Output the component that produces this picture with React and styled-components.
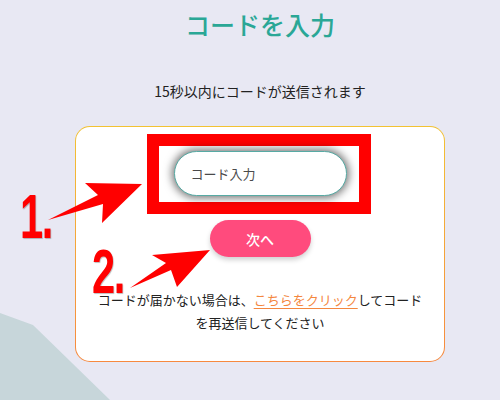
import React from "react";
import styled, { createGlobalStyle } from "styled-components";

const GlobalStyle = createGlobalStyle`
  html, body {
    margin: 0;
    padding: 0;
    background: #e8e8f3;
  }
  body {
    font-family: "Noto Sans CJK JP", "Noto Sans", sans-serif;
    color: #222;
  }
`;

const Page = styled.div`
  position: relative;
  width: 500px;
  height: 400px;
  overflow: hidden;
  box-sizing: border-box;
  padding: 9px 0 0 20px;
  display: flex;
  flex-direction: column;
  align-items: center;
`;

const Hill = styled.svg`
  position: absolute;
  left: 0;
  bottom: 0;
  z-index: 0;
`;

const Title = styled.h1`
  position: relative;
  margin: 0;
  font-size: 25px;
  line-height: 30px;
  font-weight: 500;
  color: #2aa796;
`;

const Lead = styled.p`
  position: relative;
  margin: 42px 0 0;
  font-size: 14px;
  line-height: 20px;
  color: #222;
`;

const Card = styled.div`
  position: relative;
  z-index: 1;
  margin-top: 25px;
  width: 370px;
  box-sizing: border-box;
  padding: 7px 0 27px;
  border: 1.5px solid transparent;
  border-radius: 15px;
  background: linear-gradient(#fff, #fff) padding-box,
    linear-gradient(180deg, #f2c232, #f7893f) border-box;
  display: flex;
  flex-direction: column;
  align-items: center;
`;

const Highlight = styled.div`
  box-sizing: border-box;
  width: 224px;
  height: 80px;
  border: 12.5px solid #ff0000;
  padding: 5px 12px 0 15px;
  margin-right: 3px;
`;

const CodeInput = styled.input`
  box-sizing: border-box;
  width: 173px;
  height: 45px;
  border: 1.5px solid #57aaa4;
  border-radius: 23px;
  background: #fff;
  box-shadow: 0 0 9px 2px rgba(0, 0, 0, 0.55);
  padding: 0 16px;
  font-family: inherit;
  font-size: 13px;
  color: #444;
  outline: none;

  &::placeholder {
    color: #4a4a4a;
  }
`;

const NextButton = styled.button`
  margin-top: 6px;
  width: 101px;
  height: 37px;
  border: none;
  border-radius: 19px;
  background: #ff4b7d;
  color: #fff;
  font-family: inherit;
  font-size: 14px;
  font-weight: 500;
  box-shadow: 0 3px 5px rgba(0, 0, 0, 0.18);
  cursor: pointer;
`;

const Note = styled.p`
  margin: 31px 0 0;
  width: 332px;
  text-align: center;
  font-size: 13px;
  line-height: 23px;
  color: #222;
`;

const Link = styled.a`
  color: #f4873f;
  text-decoration: underline;
  text-underline-offset: 3px;
`;

const Marks = styled.svg`
  position: absolute;
  left: 0;
  top: 0;
  z-index: 2;
  pointer-events: none;
`;

const Step = styled.span`
  position: absolute;
  z-index: 2;
  left: ${({ $x }) => $x}px;
  top: ${({ $y }) => $y}px;
  font-family: "Liberation Sans", "DejaVu Sans", sans-serif;
  font-weight: 700;
  font-size: 63px;
  line-height: 63px;
  color: #ff0000;
  letter-spacing: -2px;
  transform: scaleX(0.66);
  transform-origin: left top;
  text-shadow: 1px 1px 1px rgba(0, 0, 0, 0.25);
`;

export default function App() {
  return (
    <>
      <GlobalStyle />
      <Page>
        <Hill width="120" height="90" viewBox="0 0 120 90">
          <polygon points="0,3 33,15 110,90 0,90" fill="#c7d6da" />
        </Hill>

        <Title>コードを入力</Title>
        <Lead>15秒以内にコードが送信されます</Lead>

        <Card>
          <Highlight>
            <CodeInput placeholder="コード入力" />
          </Highlight>
          <NextButton>次へ</NextButton>
          <Note>
            コードが届かない場合は、<Link>こちらをクリック</Link>してコードを再送信してください
          </Note>
        </Card>

        <Marks width="500" height="400" viewBox="0 0 500 400">
          <polygon
            points="48,220 103,204 102,223 142,184 85,183 98,195"
            fill="#ff0000"
          />
          <polygon
            points="130,288 171,270 177,287 210,250 152,255 166,263"
            fill="#ff0000"
          />
        </Marks>
        <Step $x={20} $y={185}>1.</Step>
        <Step $x={92} $y={240}>2.</Step>
      </Page>
    </>
  );
}
